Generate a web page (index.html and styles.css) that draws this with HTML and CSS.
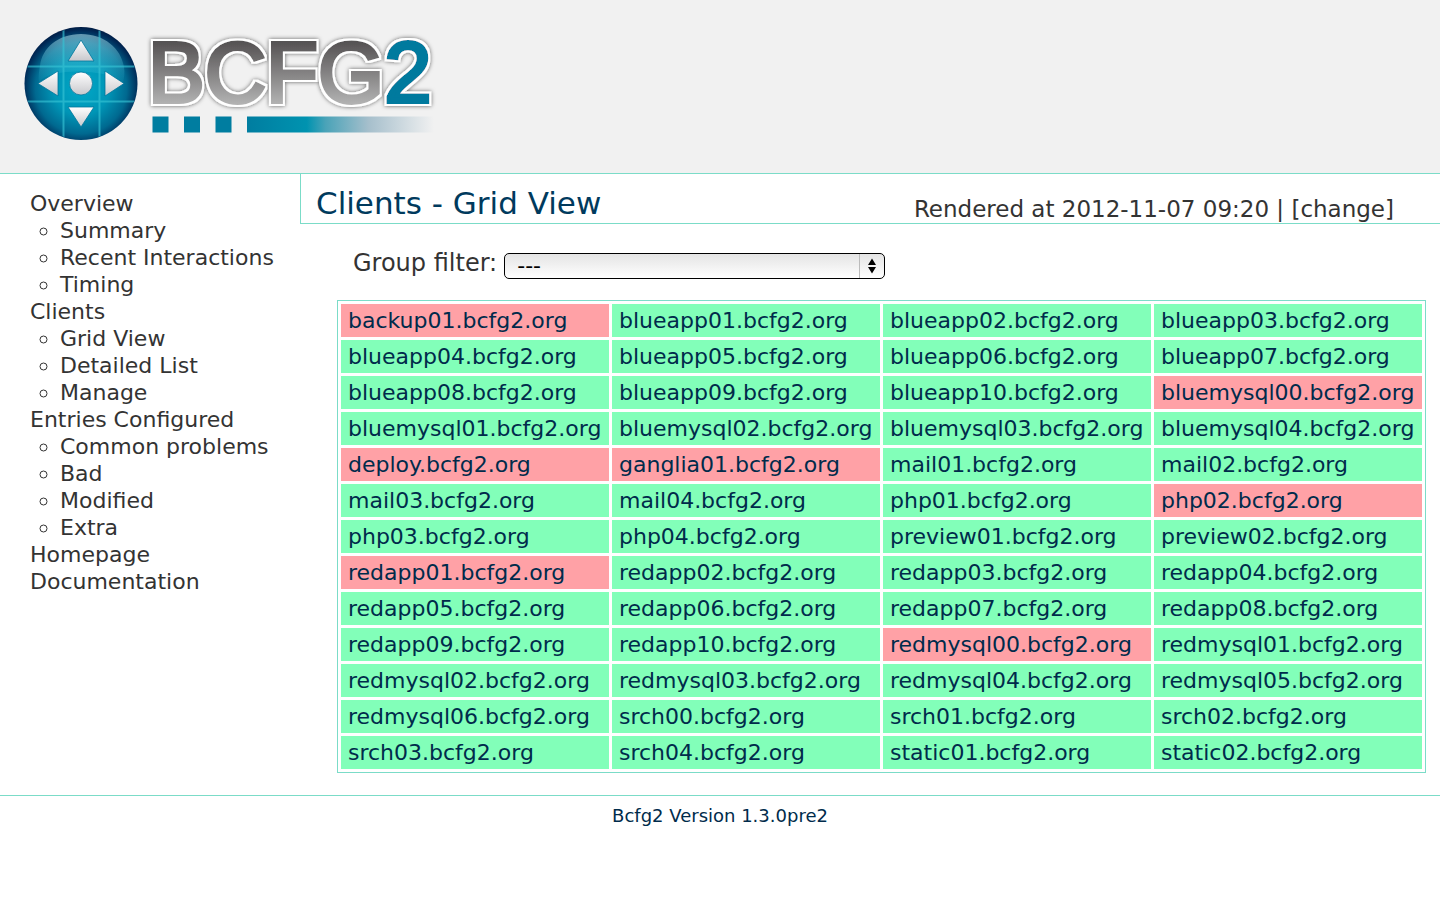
FILE: index.html
```
<!DOCTYPE html>
<html lang="en">
<head>
    <meta charset="UTF-8">
    <meta name="viewport" content="width=device-width, initial-scale=1.0">
    <title>Bcfg2 - Clients - Grid View</title>
    <link rel="stylesheet" href="styles.css">
</head>
<body>
    <div id="header">
        <svg class="logo" width="430" height="130" viewBox="16 16 430 130" role="img" aria-label="BCFG2">
            <defs>
                <radialGradient id="ball" cx="0.5" cy="0.54" r="0.54">
                    <stop offset="0" stop-color="#00a8c8"/>
                    <stop offset="0.45" stop-color="#0095b6"/>
                    <stop offset="0.75" stop-color="#006990"/>
                    <stop offset="0.94" stop-color="#002a57"/>
                    <stop offset="1" stop-color="#001b43"/>
                </radialGradient>
                <linearGradient id="shine" x1="0" y1="0" x2="0" y2="1">
                    <stop offset="0" stop-color="#c8f0f8" stop-opacity="0.5"/>
                    <stop offset="1" stop-color="#40d0e8" stop-opacity="0.08"/>
                </linearGradient>
                <linearGradient id="silver" x1="0" y1="0" x2="0" y2="1">
                    <stop offset="0" stop-color="#fff"/>
                    <stop offset="1" stop-color="#c8c8cc"/>
                </linearGradient>
                <linearGradient id="letters" gradientUnits="userSpaceOnUse" x1="0" y1="42" x2="0" y2="105">
                    <stop offset="0" stop-color="#555253"/>
                    <stop offset="1" stop-color="#b4b4b4"/>
                </linearGradient>
                <linearGradient id="bar" x1="0" y1="0" x2="1" y2="0">
                    <stop offset="0" stop-color="#007da0"/>
                    <stop offset="0.32" stop-color="#0093b0"/>
                    <stop offset="0.42" stop-color="#4aa3b8"/>
                    <stop offset="0.65" stop-color="#a6bfcc"/>
                    <stop offset="1" stop-color="#f1f1f1"/>
                </linearGradient>
                <clipPath id="disc"><circle cx="81" cy="83.5" r="56"/></clipPath>
                <!-- white edge and soft shadow round the letters -->
                <filter id="edge" filterUnits="userSpaceOnUse" x="140" y="26" width="306" height="100">
                    <feMorphology in="SourceAlpha" operator="dilate" radius="2" result="fat"/>
                    <feFlood flood-color="#fff"/>
                    <feComposite in2="fat" operator="in" result="white"/>
                    <feDropShadow in="white" dx="0" dy="0" stdDeviation="2" flood-color="#000" flood-opacity="0.6" result="back"/>
                    <feMerge>
                        <feMergeNode in="back"/>
                        <feMergeNode in="SourceGraphic"/>
                    </feMerge>
                </filter>
            </defs>
            <!-- ball -->
            <circle cx="81" cy="83.5" r="56.5" fill="url(#ball)"/>
            <g clip-path="url(#disc)">
                <path d="M40 66C42 48 58 34 81 34s40 14 43 33c1 6 0 11-1 15C110 70 52 66 39 82c-1-5 0-10 1-16z" fill="url(#shine)"/>
                <path d="M63.5 27v113M99.500 27v113M24 66.500h114M24 101.500h114" stroke="#36c3d4" stroke-width="2" opacity="0.65"/>
            </g>
            <g fill="url(#silver)" stroke="#00759a" stroke-width="0.8">
                <path d="M81 40l13 21H68z"/>
                <path d="M81 127l13-20H68z"/>
                <path d="M38 83.500l20-12.500v25z"/>
                <path d="M124 83.500l-19-12.500v25z"/>
                <circle cx="81" cy="83.500" r="11.500"/>
            </g>
            <!-- wordmark -->
            <text class="wordmark" x="148" y="102" filter="url(#edge)">BCFG<tspan class="two">2</tspan></text>
            <path d="M152.500 116.500h16v16h-16zM184 116.500h16v16h-16zM215.500 116.500h16v16h-16z" fill="#007da0"/>
            <rect x="247" y="116.500" width="187" height="16" fill="url(#bar)"/>
        </svg>
    </div>

    <div id="container">
        <div id="menu">
            <ul>
                <li><a href="#">Overview</a>
                    <ul>
                        <li><a href="#">Summary</a></li>
                        <li><a href="#">Recent Interactions</a></li>
                        <li><a href="#">Timing</a></li>
                    </ul>
                </li>
                <li><a href="#">Clients</a>
                    <ul>
                        <li><a href="#">Grid View</a></li>
                        <li><a href="#">Detailed List</a></li>
                        <li><a href="#">Manage</a></li>
                    </ul>
                </li>
                <li><a href="#">Entries Configured</a>
                    <ul>
                        <li><a href="#">Common problems</a></li>
                        <li><a href="#">Bad</a></li>
                        <li><a href="#">Modified</a></li>
                        <li><a href="#">Extra</a></li>
                    </ul>
                </li>
                <li><a href="#">Homepage</a></li>
                <li><a href="#">Documentation</a></li>
            </ul>
        </div>

        <div id="content">
            <div class="content_head">
                <h1>Clients - Grid View</h1>
                <div class="rendered">Rendered at 2012-11-07 09:20 | <a href="#">[change]</a></div>
            </div>
            <div class="filter">
                <label for="group">Group filter:</label>
                <div class="select_wrap">
                    <select id="group">
                        <option>---</option>
                    </select>
                    <svg width="25" height="24" viewBox="0 0 25 24" aria-hidden="true">
                        <path d="M0.500 0v24" stroke="#bbb"/>
                        <path d="M13 4.500l4 6.500H9zM13 19.500l4-6.500H9z"/>
                    </svg>
                </div>
            </div>
            <table class="grid">
                <tr>
                    <td class="bad"><a href="#">backup01.bcfg2.org</a></td>
                    <td><a href="#">blueapp01.bcfg2.org</a></td>
                    <td><a href="#">blueapp02.bcfg2.org</a></td>
                    <td><a href="#">blueapp03.bcfg2.org</a></td>
                </tr>
                <tr>
                    <td><a href="#">blueapp04.bcfg2.org</a></td>
                    <td><a href="#">blueapp05.bcfg2.org</a></td>
                    <td><a href="#">blueapp06.bcfg2.org</a></td>
                    <td><a href="#">blueapp07.bcfg2.org</a></td>
                </tr>
                <tr>
                    <td><a href="#">blueapp08.bcfg2.org</a></td>
                    <td><a href="#">blueapp09.bcfg2.org</a></td>
                    <td><a href="#">blueapp10.bcfg2.org</a></td>
                    <td class="bad"><a href="#">bluemysql00.bcfg2.org</a></td>
                </tr>
                <tr>
                    <td><a href="#">bluemysql01.bcfg2.org</a></td>
                    <td><a href="#">bluemysql02.bcfg2.org</a></td>
                    <td><a href="#">bluemysql03.bcfg2.org</a></td>
                    <td><a href="#">bluemysql04.bcfg2.org</a></td>
                </tr>
                <tr>
                    <td class="bad"><a href="#">deploy.bcfg2.org</a></td>
                    <td class="bad"><a href="#">ganglia01.bcfg2.org</a></td>
                    <td><a href="#">mail01.bcfg2.org</a></td>
                    <td><a href="#">mail02.bcfg2.org</a></td>
                </tr>
                <tr>
                    <td><a href="#">mail03.bcfg2.org</a></td>
                    <td><a href="#">mail04.bcfg2.org</a></td>
                    <td><a href="#">php01.bcfg2.org</a></td>
                    <td class="bad"><a href="#">php02.bcfg2.org</a></td>
                </tr>
                <tr>
                    <td><a href="#">php03.bcfg2.org</a></td>
                    <td><a href="#">php04.bcfg2.org</a></td>
                    <td><a href="#">preview01.bcfg2.org</a></td>
                    <td><a href="#">preview02.bcfg2.org</a></td>
                </tr>
                <tr>
                    <td class="bad"><a href="#">redapp01.bcfg2.org</a></td>
                    <td><a href="#">redapp02.bcfg2.org</a></td>
                    <td><a href="#">redapp03.bcfg2.org</a></td>
                    <td><a href="#">redapp04.bcfg2.org</a></td>
                </tr>
                <tr>
                    <td><a href="#">redapp05.bcfg2.org</a></td>
                    <td><a href="#">redapp06.bcfg2.org</a></td>
                    <td><a href="#">redapp07.bcfg2.org</a></td>
                    <td><a href="#">redapp08.bcfg2.org</a></td>
                </tr>
                <tr>
                    <td><a href="#">redapp09.bcfg2.org</a></td>
                    <td><a href="#">redapp10.bcfg2.org</a></td>
                    <td class="bad"><a href="#">redmysql00.bcfg2.org</a></td>
                    <td><a href="#">redmysql01.bcfg2.org</a></td>
                </tr>
                <tr>
                    <td><a href="#">redmysql02.bcfg2.org</a></td>
                    <td><a href="#">redmysql03.bcfg2.org</a></td>
                    <td><a href="#">redmysql04.bcfg2.org</a></td>
                    <td><a href="#">redmysql05.bcfg2.org</a></td>
                </tr>
                <tr>
                    <td><a href="#">redmysql06.bcfg2.org</a></td>
                    <td><a href="#">srch00.bcfg2.org</a></td>
                    <td><a href="#">srch01.bcfg2.org</a></td>
                    <td><a href="#">srch02.bcfg2.org</a></td>
                </tr>
                <tr>
                    <td><a href="#">srch03.bcfg2.org</a></td>
                    <td><a href="#">srch04.bcfg2.org</a></td>
                    <td><a href="#">static01.bcfg2.org</a></td>
                    <td><a href="#">static02.bcfg2.org</a></td>
                </tr>
            </table>
        </div>
    </div>

    <div id="footer">Bcfg2 Version 1.3.0pre2</div>
</body>
</html>
```
FILE: styles.css
```
body{
    margin: 0;
    background-color: #fff;
    color: #333;
    font-family: Verdana, "DejaVu Sans", sans-serif;
    font-size: 22px;
    line-height: 27px;
}
a{
    color: inherit;
    text-decoration: none;
}
a:hover{
    text-decoration: underline;
}

/* header */
#header{
    padding: 16px 16px 27px;
    background-color: #f1f1f1;
    border-bottom: 1px solid #7bdcc8;
}
.logo{
    display: block;
}
.wordmark{
    font-family: "Liberation Sans", Arial, sans-serif;
    font-size: 85px;
    fill: url(#letters);
    stroke: url(#letters);
    stroke-width: 4px;
}
.wordmark .two{
    fill: #007a9e;
    stroke: #007a9e;
}

/* menu + content */
#container{
    display: flex;
    align-items: flex-start;
}
#menu{
    width: 300px;
    flex-shrink: 0;
    padding-top: 16px;
}
#menu ul{
    margin: 0;
    padding-left: 30px;
    list-style: none;
}
#menu ul ul{
    list-style: circle;
}
#content{
    flex: 1;
    min-width: 0;
}
.content_head{
    display: flex;
    justify-content: space-between;
    align-items: flex-end;
    height: 49px;
    padding: 0 46px 0 15px;
    border-left: 1px solid #7bdcc8;
    border-bottom: 1px solid #7bdcc8;
}
.content_head h1{
    margin: 0;
    padding-bottom: 2px;
    color: #003a5d;
    font-size: 31px;
    font-weight: normal;
    line-height: 36px;
}
.rendered{
    font-size: 23px;
}
.filter{
    display: flex;
    align-items: flex-start;
    gap: 7px;
    padding: 26px 0 21px 53px;
}
.filter label{
    font-size: 24px;
}
.select_wrap{
    position: relative;
    width: 381px;
    height: 26px;
    margin-top: 3px;
}
.select_wrap select{
    display: block;
    width: 100%;
    height: 26px;
    padding: 0 30px 0 12px;
    border: 1px solid #000;
    border-radius: 5px;
    background: linear-gradient(#e4e4e4, #fff);
    color: #000;
    font-family: inherit;
    font-size: 22px;
    line-height: 24px;
    -webkit-appearance: none;
    appearance: none;
}
.select_wrap svg{
    position: absolute;
    top: 1px;
    right: 1px;
    pointer-events: none;
}

/* clients */
.grid{
    width: calc(100% - 51px);
    margin: 0 14px 0 37px;
    border: 1px solid #7bdcc8;
    border-spacing: 3px;
    table-layout: fixed;
}
.grid td{
    padding: 3px 7px;
    background-color: #82ffb9;
    color: #002b4b;
    white-space: nowrap;
}
.grid td.bad{
    background-color: #ffa1a6;
}

#footer{
    margin-top: 22px;
    padding-top: 6px;
    border-top: 1px solid #7bdcc8;
    color: #002b4b;
    font-size: 18px;
    text-align: center;
}
```
